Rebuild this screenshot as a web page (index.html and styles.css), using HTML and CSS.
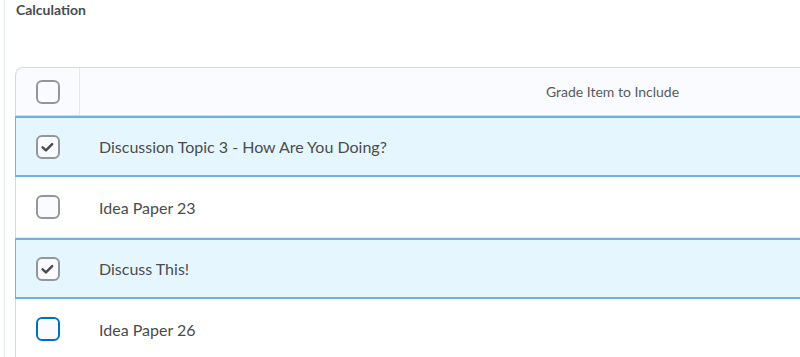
FILE: index.html
```html
<!DOCTYPE html>
<html lang="en">
<head>
    <meta charset="UTF-8">
    <title>Calculation</title>
    <link rel="stylesheet" href="styles.css">
</head>
<body>
    <div class="panel">
        <h2 class="title">Calculation</h2>

        <div class="grid">
            <div class="row head">
                <div class="cell check-cell">
                    <span class="box"></span>
                </div>
                <div class="cell label-cell centered">Grade Item to Include</div>
            </div>

            <div class="row selected">
                <div class="cell check-cell">
                    <span class="box">
                        <svg viewBox="0 0 24 24"><path d="M5.5 12.5 L9.5 16 L17 8.5"/></svg>
                    </span>
                </div>
                <div class="cell label-cell">Discussion Topic 3 - How Are You Doing?</div>
            </div>

            <div class="row">
                <div class="cell check-cell">
                    <span class="box"></span>
                </div>
                <div class="cell label-cell">Idea Paper 23</div>
            </div>

            <div class="row selected">
                <div class="cell check-cell">
                    <span class="box">
                        <svg viewBox="0 0 24 24"><path d="M5.5 12.5 L9.5 16 L17 8.5"/></svg>
                    </span>
                </div>
                <div class="cell label-cell">Discuss This!</div>
            </div>

            <div class="row">
                <div class="cell check-cell">
                    <span class="box focus"></span>
                </div>
                <div class="cell label-cell">Idea Paper 26</div>
            </div>
        </div>
    </div>
</body>
</html>
```

FILE: styles.css
```css
body {
    margin: 0;
    font-family: Lato, "Noto Sans", sans-serif;
    color: #494c4e;
    background: #fff;
    overflow: hidden;
}

.panel {
    margin-left: 4px;
    border-left: 1px solid #e3e9f1;
    padding-left: 10px;
    height: 100vh;
    overflow: hidden;
}

.title {
    margin: 0;
    padding-left: 1px;
    font-size: 14px;
    line-height: 19px;
    font-weight: 700;
}

.grid {
    margin-top: 48px;
    width: 1130px;
    border-top: 1px solid #d3d9e3;
    border-radius: 8px 0 0 0;
}

.row {
    display: flex;
    box-sizing: border-box;
    height: 61px;
    border-left: 1px solid #d3d9e3;
    border-bottom: 1px solid #e3e9f1;
}

.row.head {
    height: 48px;
    background: #f9fbff;
    border-bottom-color: #d3d9e3;
    border-radius: 8px 0 0 0;
}

.row.selected {
    background: #e6f6ff;
    border: 2px solid #6cb1e2;
    border-width: 2px 0 2px 1px;
}

.cell {
    display: flex;
    align-items: center;
}

.check-cell {
    width: 63px;
    justify-content: center;
}

.head .check-cell {
    border-right: 1px solid #e3e9f1;
}

.label-cell {
    flex: 1;
    padding-left: 20px;
    font-size: 16px;
}

.label-cell.centered {
    justify-content: center;
    padding-left: 0;
    font-size: 14px;
    color: #565a5c;
}

.box {
    box-sizing: border-box;
    width: 24px;
    height: 24px;
    border: 2px solid #90989d;
    border-radius: 6px;
    background: #f9fbff;
    display: flex;
    align-items: center;
    justify-content: center;
}

.box svg {
    width: 22px;
    height: 22px;
    fill: none;
    stroke: #494c4e;
    stroke-width: 3;
    stroke-linecap: round;
    stroke-linejoin: round;
}

.box.focus {
    border-color: #006fbf;
}
```
